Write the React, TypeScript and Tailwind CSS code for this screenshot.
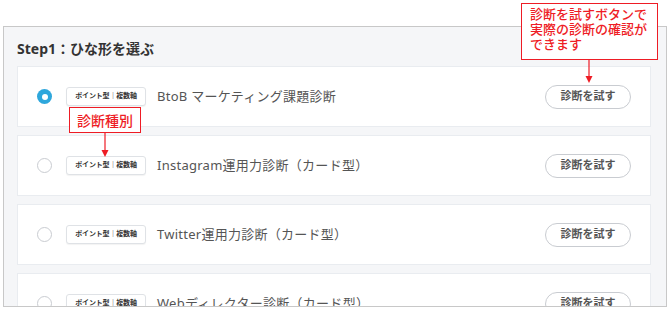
import React from "react";

const rows = [
  { title: "BtoB マーケティング課題診断", checked: true },
  { title: "Instagram運用力診断（カード型）" },
  { title: "Twitter運用力診断（カード型）" },
  { title: "Webディレクター診断（カード型）" },
];

const Arrow = ({ h, className }: { h: number; className: string }) => (
  <svg width="10" height={h} viewBox={`0 0 10 ${h}`} className={className}>
    <line x1="5" y1="0" x2="5" y2={h - 6} stroke="#ee1c25" strokeWidth="1.2" />
    <path d={`M1.5 ${h - 7} L5 ${h} L8.5 ${h - 7} Z`} fill="#ee1c25" />
  </svg>
);

const Row = ({ title, checked }: { title: string; checked?: boolean }) => (
  <div className="flex items-center h-[61px] shrink-0 bg-white border border-[#e9ecf0] pl-[19px] pr-[19px]">
    {checked ? (
      <span className="w-[15px] h-[15px] rounded-full bg-[#2ea7dc] flex items-center justify-center shrink-0">
        <span className="w-[6px] h-[6px] rounded-full bg-white" />
      </span>
    ) : (
      <span className="w-[15px] h-[15px] rounded-full border border-[#c9ccd1] bg-white shrink-0" />
    )}
    <span className="ml-[14px] w-[80px] h-[19px] rounded-[3px] border border-[#dfe2e6] bg-white shadow-[0_1px_1px_rgba(0,0,0,0.05)] flex items-center justify-center text-[7px] font-bold text-[#333] tracking-tight shrink-0">
      ポイント型｜複数軸
    </span>
    <span className="ml-[11px] text-[13px] text-[#555] tracking-[0.02em]">{title}</span>
    <button className="ml-auto w-[86px] h-[24px] rounded-full border border-[#c9ccd1] bg-white text-[11px] font-bold text-[#555]">
      診断を試す
    </button>
  </div>
);

export default function App() {
  return (
    <div
      className="relative w-[670px] h-[310px] bg-white overflow-hidden"
      style={{ fontFamily: '"Noto Sans", "Noto Sans CJK JP", sans-serif' }}
    >
      <div className="absolute left-[3px] top-[26px] w-[664px] h-[281px] border border-[#c8c8c8] bg-[#f5f6f8] overflow-hidden pl-[13px] pr-[15px]">
        <div className="h-[39px] pt-[11px] text-[14px] font-bold text-[#333]">Step1：ひな形を選ぶ</div>
        <div className="flex flex-col gap-[8px]">
          {rows.map((r) => (
            <Row key={r.title} title={r.title} checked={r.checked} />
          ))}
        </div>
      </div>

      {/* annotation: badge */}
      <div className="absolute left-[69px] top-[107px] w-[72px] h-[26px] border-[1.5px] border-[#ee1c25] bg-white flex items-center justify-center text-[14px] font-medium text-[#ee1c25]">
        診断種別
      </div>
      <Arrow h={24} className="absolute left-[100px] top-[133px]" />

      {/* annotation: button */}
      <div className="absolute left-[521px] top-[3px] w-[137px] h-[57px] border-[1.5px] border-[#ee1c25] bg-white pl-[8px] pt-[3px] text-[13px] font-medium leading-[15px] text-[#ee1c25]">
        診断を試すボタンで
        <br />
        実際の診断の確認が
        <br />
        できます
      </div>
      <Arrow h={24} className="absolute left-[584px] top-[59px]" />
    </div>
  );
}
